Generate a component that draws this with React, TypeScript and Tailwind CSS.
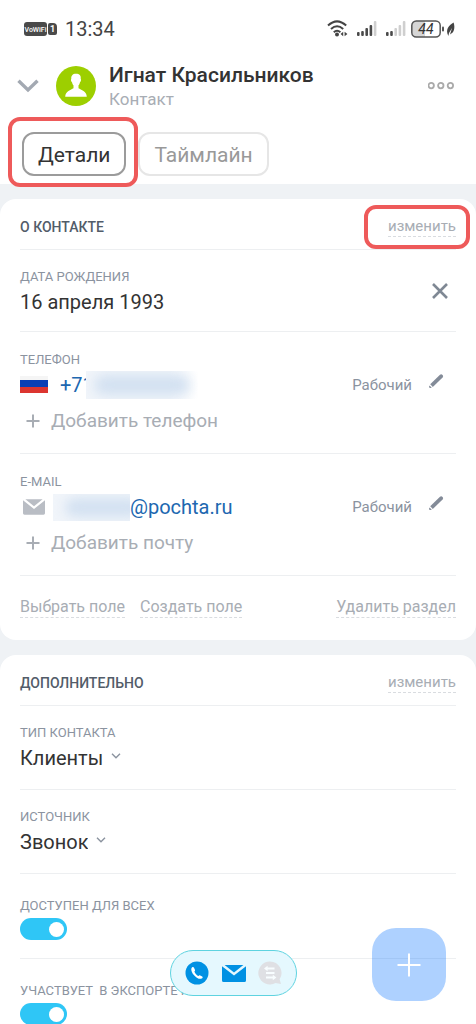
import React from 'react';

interface SelectFieldProps {
  id: string;
  label: string;
  value: string;
}

interface SwitchFieldProps {
  id: string;
  label: string;
}

interface ContactRowProps {
  label: string;
  icon: React.ReactNode;
  addText: string;
  children: React.ReactNode;
}

const EnvelopeIcon: React.FC<{ className: string }> = ({ className }) => (
  <svg viewBox="0 0 24 17" className={className} fill="currentColor" aria-hidden="true">
    <path d="M2.6 0H21.4L12 7.6Z" />
    <path d="M0 1.2 12 10.6 24 1.2V15.4Q24 17 22.4 17H1.6Q0 17 0 15.4Z" />
  </svg>
);

const StatusBar: React.FC = () => (
  <div className="flex h-14 items-center justify-between pl-6 pr-5 pt-px text-[#444]">
    <div className="flex items-center">
      <svg viewBox="0 0 23 14" className="h-[14px] w-[23px]" aria-label="VoWiFi">
        <rect width="23" height="14" rx="3" fill="#4a4a4a" />
        <text x="11.5" y="9.5" fontSize="7" fontWeight="500" fill="#fff" textAnchor="middle">VoWiFi</text>
      </svg>
      <span className="ml-px flex h-3 w-[9px] items-center justify-center rounded-[2px] rounded-tr-[4px] bg-[#4a4a4a] text-[9px] font-bold leading-3 text-white">1</span>
      <span className="ml-2 text-[20px] leading-6">13:34</span>
    </div>
    <div className="flex items-center">
      <svg viewBox="0 0 21 17" className="h-[17px] w-[21px]" fill="none" stroke="currentColor" strokeWidth="2" aria-hidden="true">
        <path d="M1 5.6Q10 -2.8 19.2 5.6" />
        <path d="M4 9Q10 3.6 16.2 9" />
        <path d="M6.8 12.2Q10 9.2 13.4 12.2" />
        <circle cx="10" cy="14.6" r="2" fill="currentColor" stroke="none" />
        <path d="M13.6 14 16.2 11.8V16.2ZM20.4 14 17.6 11.8V16.2Z" fill="currentColor" stroke="none" />
      </svg>
      <SignalIcon active={4} />
      <SignalIcon active={2} />
      <svg viewBox="0 0 46 18" className="ml-1 h-[18px] w-[46px]" aria-hidden="true">
        <path d="M6 1H15V17H6Q2 17 2 13V5Q2 1 6 1Z" fill="#d6d6d6" />
        <rect x="1.8" y="1" width="28.4" height="16" rx="4.5" fill="none" stroke="#555" strokeWidth="1.5" />
        <rect x="32" y="6.5" width="2" height="5" rx="1" fill="#555" />
        <text x="16" y="14" fontSize="14" fontStyle="italic" fill="#333" textAnchor="middle">44</text>
        <path d="M43.6 2.6C45.4 8 44 13 40 14.4L42 8 39 13 38.4 16C35.2 10 38.4 5.4 43.6 2.6Z" fill="#444" />
      </svg>
    </div>
  </div>
);

const SignalIcon: React.FC<{ active: number }> = ({ active }) => (
  <svg viewBox="0 0 20 16" className="ml-[9px] h-4 w-5" aria-hidden="true">
    {[0, 1, 2, 3, 4].map((i) => (
      <rect
        key={i}
        x={i * 4.2}
        y={[11, 10, 7, 4, 0][i]}
        width="2.6"
        height={[4, 5, 8, 11, 15][i]}
        rx="1"
        fill={i < active ? '#4a4a4a' : '#cfcfcf'}
      />
    ))}
  </svg>
);

const EditButton: React.FC = () => (
  <button className="border-b border-dashed border-[#d9dce0] text-[15px] leading-5 text-[#a8adb4]">изменить</button>
);

const FieldLabel: React.FC<{ children: React.ReactNode }> = ({ children }) => (
  <p className="whitespace-pre text-[13px] leading-4 text-[#8b939f]">{children}</p>
);

const ContactRow: React.FC<ContactRowProps> = ({ label, icon, addText, children }) => (
  <div className="border-b border-[#edeff1] pb-5 pt-5">
    <FieldLabel>{label}</FieldLabel>
    <div className="mt-[3px] flex h-7 items-center">
      <span className="flex w-7 justify-center">{icon}</span>
      {children}
      <span className="ml-auto text-[15px] text-[#8b939f]">Рабочий</span>
      <button aria-label="Редактировать" className="ml-4 mr-3 pb-2 text-[#838b98]">
        <svg viewBox="0 0 16 16" className="h-4 w-4" fill="currentColor" aria-hidden="true">
          <path d="M1.4 12.4 3.8 14.4 2.4 14.9Q1 15.2 1.1 13.8Z" />
          <path d="M2.2 11.2 12 1.8Q13.2.8 14.6 2 15.7 3.3 14.6 4.6L4.8 14Z" />
        </svg>
      </button>
    </div>
    <button className="mt-[9px] flex h-[25px] items-center text-[19px] text-[#a8adb4]">
      <svg viewBox="0 0 14 14" className="ml-[6px] h-[14px] w-[14px]" fill="none" stroke="currentColor" strokeWidth="2" aria-hidden="true">
        <path d="M7 .5V13.5M.5 7H13.5" />
      </svg>
      <span className="ml-[11px] pt-0.5">{addText}</span>
    </button>
  </div>
);

const SelectField: React.FC<SelectFieldProps> = ({ id, label, value }) => (
  <div className="border-b border-[#edeff1] pb-[18px] pt-[19px]">
    <label htmlFor={id} className="block text-[13px] leading-4 text-[#8b939f]">{label}</label>
    <div className="mt-1 flex items-center">
      <select id={id} defaultValue={value} className="h-[26px] appearance-none bg-transparent text-[20px] leading-[26px] text-[#333] [field-sizing:content]">
        <option>{value}</option>
      </select>
      <svg viewBox="0 0 10 6" className="pointer-events-none mb-1 ml-2 h-[6px] w-[10px]" fill="none" stroke="#8b939f" strokeWidth="1.4" aria-hidden="true">
        <path d="M1 .8 5 4.8 9 .8" />
      </svg>
    </div>
  </div>
);

const SwitchField: React.FC<SwitchFieldProps> = ({ id, label }) => (
  <div className="border-b border-[#edeff1] pb-[18px] pt-6">
    <label htmlFor={id} className="block whitespace-pre text-[13px] leading-4 text-[#8b939f]">{label}</label>
    <input
      id={id}
      type="checkbox"
      role="switch"
      defaultChecked
      className="mt-1 flex h-[22px] w-[47px] appearance-none items-center rounded-full bg-[#b8bec5] px-[3px] before:h-[15px] before:w-[15px] before:rounded-full before:bg-white checked:justify-end checked:bg-[#2fc6f6]"
    />
  </div>
);

const App: React.FC = () => {
  return (
    <div className="h-screen overflow-hidden bg-[#eff2f5] font-['Roboto',sans-serif]">
      <header className="bg-white pb-2">
        <StatusBar />
        <div className="flex h-[60px] items-center px-5">
          <button aria-label="Свернуть" className="-ml-1 text-[#a3a9b2]">
            <svg viewBox="0 0 24 14" className="h-[14px] w-6" fill="none" stroke="currentColor" strokeWidth="3.4" aria-hidden="true">
              <path d="M2.5 1.8 12 11 21.5 1.8" />
            </svg>
          </button>
          <svg viewBox="0 0 40 40" className="ml-4 h-10 w-10" aria-hidden="true">
            <circle cx="20" cy="20" r="20" fill="#9dcf00" />
            <path
              d="M20 7.8C16.6 7.8 15 9.8 15.3 13 14.6 13.4 15 15.6 16 16.2 16.3 17.8 17 18.8 17.5 19.3V22.3C15 24 9.4 25 9.2 30.8H30.8C30.6 25 25 24 22.5 22.3V19.3C23 18.8 23.7 17.8 24 16.2 25 15.6 25.4 13.4 24.7 13 25.2 9.4 23.4 7.8 20 7.8Z"
              fill="#fff"
            />
          </svg>
          <div className="ml-[13px] pt-0.5">
            <h1 className="text-[21px] font-medium leading-6 text-[#333]">Игнат Красильников</h1>
            <p className="text-[17px] leading-6 text-[#a8adb4]">Контакт</p>
          </div>
          <button aria-label="Ещё" className="ml-auto">
            <svg viewBox="0 0 28 8" className="h-2 w-7" fill="none" stroke="#aaa" strokeWidth="1.8" aria-hidden="true">
              <circle cx="3.2" cy="3.6" r="2.7" />
              <circle cx="12.8" cy="3.6" r="2.7" />
              <circle cx="22.4" cy="3.6" r="2.7" />
            </svg>
          </button>
        </div>
        <nav className="flex gap-3 px-[22px] pt-4">
          <div className="relative">
            <button className="h-11 rounded-xl border-2 border-[#9b9b9b] px-[14px] pt-0.5 text-[21px] leading-6 text-[#333]">Детали</button>
            <span className="pointer-events-none absolute -bottom-[11px] -left-[14px] -right-3 -top-[15px] rounded-xl border-4 border-[#ee5a5a]" />
          </div>
          <button className="h-11 rounded-xl border-2 border-[#e6e6e6] px-[14px] pt-0.5 text-[21px] leading-6 text-[#999]">Таймлайн</button>
        </nav>
      </header>

      <main className="mt-[15px] flex flex-col gap-[15px]">
        <section className="rounded-2xl bg-white px-5">
          <div className="flex h-[51px] items-center justify-between border-b border-[#edeff1] pt-1">
            <h2 className="pt-0.5 text-[14px] font-medium text-[#525c69]">О КОНТАКТЕ</h2>
            <div className="relative flex">
              <EditButton />
              <span className="pointer-events-none absolute -bottom-3 -left-6 -right-[14px] -top-[11px] rounded-xl border-4 border-[#ee5a5a]" />
            </div>
          </div>

          <div className="flex h-[82px] items-center justify-between border-b border-[#edeff1]">
            <div className="pt-0.5">
              <FieldLabel>ДАТА РОЖДЕНИЯ</FieldLabel>
              <p className="mt-1 text-[20px] leading-[26px] text-[#333]">16 апреля 1993</p>
            </div>
            <button aria-label="Очистить дату" className="mr-2 text-[#7f8894]">
              <svg viewBox="0 0 16 16" className="h-4 w-4" fill="none" stroke="currentColor" strokeWidth="2.6" aria-hidden="true">
                <path d="M1 1 15 15M15 1 1 15" />
              </svg>
            </button>
          </div>

          <ContactRow
            label="ТЕЛЕФОН"
            addText="Добавить телефон"
            icon={
              <svg viewBox="0 0 28 20" className="h-5 w-7" aria-hidden="true">
                <path d="M0 1H28V5H0Z" fill="#f5f5f5" />
                <path d="M0 5H28V12H0Z" fill="#0b3fb5" />
                <path d="M0 12H28V18H0Z" fill="#dc3530" />
              </svg>
            }
          >
            <a href="tel:+71" className="ml-3 flex items-center text-[20px] text-[#2067b0]">
              <span>+71</span>
              <span className="relative -ml-2 h-7 w-[112px] overflow-hidden bg-linear-to-r from-[#f1f5fa] from-75% to-white">
                <span className="absolute inset-x-2 inset-y-1 rounded-full bg-[#d3e1f1] blur-[6px]" />
              </span>
            </a>
          </ContactRow>

          <ContactRow
            label="E-MAIL"
            addText="Добавить почту"
            icon={<EnvelopeIcon className="h-4 w-[22px] text-[#b9bdc4]" />}
          >
            <a href="mailto:@pochta.ru" className="ml-[5px] flex items-center text-[20px] text-[#2067b0]">
              <span className="relative h-[27px] w-[77px] overflow-hidden bg-[#f1f5fa]">
                <span className="absolute -right-3 bottom-1 left-3 top-1 rounded-full bg-[#d3e1f1] blur-[6px]" />
              </span>
              <span>@pochta.ru</span>
            </a>
          </ContactRow>

          <div className="flex h-16 items-center gap-[15px] pb-0.5 text-[16px] leading-5 text-[#a8adb4]">
            <button className="border-b border-dashed border-[#d9dce0]">Выбрать поле</button>
            <button className="border-b border-dashed border-[#d9dce0]">Создать поле</button>
            <button className="ml-auto border-b border-dashed border-[#d9dce0]">Удалить раздел</button>
          </div>
        </section>

        <section className="rounded-t-2xl bg-white px-5">
          <div className="flex h-[51px] items-center justify-between border-b border-[#edeff1] pt-1">
            <h2 className="pt-0.5 text-[14px] font-medium text-[#525c69]">ДОПОЛНИТЕЛЬНО</h2>
            <EditButton />
          </div>
          <SelectField id="contact-type" label="ТИП КОНТАКТА" value="Клиенты" />
          <SelectField id="source" label="ИСТОЧНИК" value="Звонок" />
          <SwitchField id="available" label="ДОСТУПЕН ДЛЯ ВСЕХ" />
          <SwitchField id="export" label="УЧАСТВУЕТ  В ЭКСПОРТЕ КОНТАКТОВ" />
        </section>
      </main>

      {/* quick actions */}
      <div className="fixed bottom-7 left-1/2 flex h-[46px] w-[127px] -translate-x-[68px] items-center justify-between rounded-full border border-[#5fd3e0] bg-[#e5f8fe] px-[14px]">
        <button aria-label="Позвонить">
          <svg viewBox="0 0 24 24" className="h-6 w-6" aria-hidden="true">
            <circle cx="12" cy="12" r="11.5" fill="#0091e3" />
            <path
              d="M7.2 6.2C5.6 7.4 6.2 10.6 8.4 13.4 10.8 16.6 14.6 18.6 16.6 17.6 17.8 17 18 16 17.2 15.4L15.2 14.4C14.4 14 14 14.4 13.6 15 11.8 14.4 10 12.2 9.4 10.4 10 10 10.2 9.4 9.9 8.8L8.9 6.6C8.5 5.8 7.8 5.8 7.2 6.2Z"
              fill="#fff"
            />
          </svg>
        </button>
        <button aria-label="Написать письмо">
          <EnvelopeIcon className="h-[17px] w-6 text-[#0091e3]" />
        </button>
        <button aria-label="Чат">
          <svg viewBox="0 0 24 24" className="h-6 w-6" aria-hidden="true">
            <path d="M12 .5A11.5 11.5 0 1 0 17.5 22L23 23 21.6 18.3A11.5 11.5 0 0 0 12 .5Z" fill="#dfe0e4" />
            <path d="M9 7.5H16.5M8 12H16.5M8 16.5H15" stroke="#f8fdff" strokeWidth="2" fill="none" />
            <path d="M6 7.5 9.6 4.8V10.2ZM18.4 16.5 14.8 13.8V19.2Z" fill="#f8fdff" />
          </svg>
        </button>
      </div>
      <button aria-label="Добавить" className="fixed bottom-[23px] right-[30px] flex h-[73px] w-[74px] items-center justify-center rounded-3xl bg-[#0a73ff]/33">
        <svg viewBox="0 0 24 24" className="h-6 w-6" fill="none" stroke="#fff" strokeWidth="2" aria-hidden="true">
          <path d="M12 .5V23.5M.5 12H23.5" />
        </svg>
      </button>
    </div>
  );
};

export default App;
